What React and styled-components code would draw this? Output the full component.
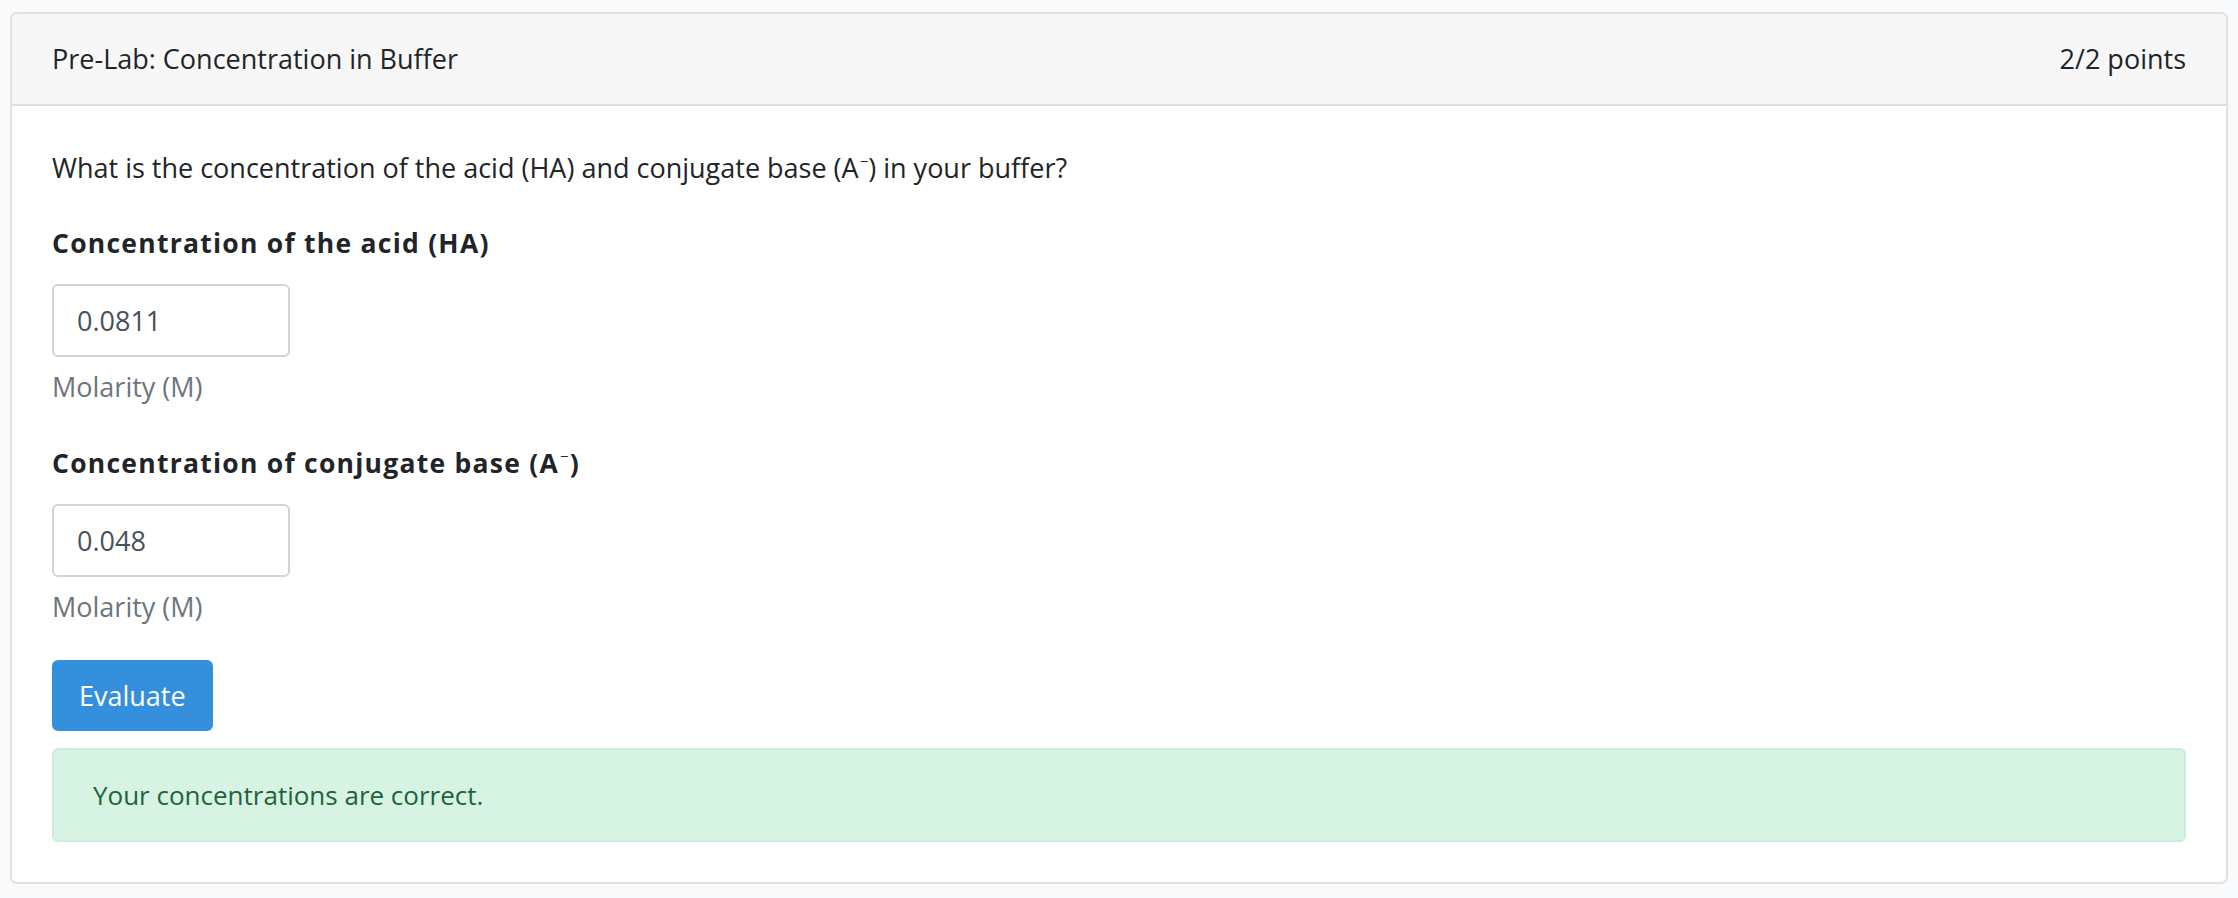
import styled, { createGlobalStyle } from "styled-components";

const GlobalStyle = createGlobalStyle`
  body {
    margin: 0;
    background: #f8fafc;
    font-family: "Open Sans", "Noto Sans", sans-serif;
    color: #212529;
  }
`;

const Page = styled.div`
  padding: 12px 10px 13px;
`;

const Card = styled.div`
  background: #fff;
  border: 2px solid #e0e1e2;
  border-radius: 7px;
  overflow: hidden;
`;

const CardHeader = styled.div`
  display: flex;
  justify-content: space-between;
  align-items: center;
  padding: 27px 40px;
  background: #f7f7f7;
  border-bottom: 2px solid #dfdfdf;
  font-size: 27px;
  line-height: 36px;
`;

const CardBody = styled.div`
  display: flex;
  flex-direction: column;
  align-items: flex-start;
  padding: 44px 40px 40px;
`;

const Question = styled.p`
  margin: 0 0 39px;
  font-size: 27px;
  line-height: 36px;
`;

const Field = styled.div`
  display: flex;
  flex-direction: column;
  align-items: flex-start;
  margin-bottom: ${(p) => (p.$last ? "35px" : "40px")};
`;

const FieldLabel = styled.label`
  margin-bottom: 23px;
  font-size: 26.5px;
  font-weight: 700;
  letter-spacing: 1.25px;
  line-height: 36px;
`;

const Sup = styled.sup`
  font-size: 15px;
  font-weight: 400;
  line-height: 0;
  vertical-align: 11px;
  margin-left: 1px;
`;

const Input = styled.input`
  box-sizing: border-box;
  width: 238px;
  height: 73px;
  padding: 0 23px;
  border: 2px solid #ced4da;
  border-radius: 6px;
  background: #fff;
  color: #495057;
  font-family: inherit;
  font-size: 27px;
  outline: none;
`;

const HelpText = styled.span`
  margin-top: 12px;
  color: #6c757d;
  font-size: 27px;
  line-height: 36px;
`;

const Button = styled.button`
  height: 71px;
  padding: 0 25px;
  border: 2px solid #3490dc;
  border-radius: 6px;
  background: #3490dc;
  color: #fff;
  font-family: inherit;
  font-size: 27px;
  cursor: pointer;
`;

const Alert = styled.div`
  box-sizing: border-box;
  align-self: stretch;
  margin-top: 17px;
  padding: 27px 39px;
  border: 2px solid #c7eed8;
  border-radius: 6px;
  background: #d7f3e3;
  color: #1d643b;
  font-size: 26px;
  line-height: 36px;
`;

const fields = [
  {
    label: <>Concentration of the acid (HA)</>,
    value: "0.0811",
  },
  {
    label: (
      <>
        Concentration of conjugate base (A<Sup>−</Sup>)
      </>
    ),
    value: "0.048",
  },
];

export default function App() {
  return (
    <>
      <GlobalStyle />
      <Page>
        <Card>
          <CardHeader>
            <span>Pre-Lab: Concentration in Buffer</span>
            <span>2/2 points</span>
          </CardHeader>
          <CardBody>
            <Question>
              What is the concentration of the acid (HA) and conjugate base (A
              <Sup>−</Sup>) in your buffer?
            </Question>
            {fields.map((f, i) => (
              <Field key={i} $last={i === fields.length - 1}>
                <FieldLabel>{f.label}</FieldLabel>
                <Input type="text" defaultValue={f.value} readOnly />
                <HelpText>Molarity (M)</HelpText>
              </Field>
            ))}
            <Button type="button">Evaluate</Button>
            <Alert>Your concentrations are correct.</Alert>
          </CardBody>
        </Card>
      </Page>
    </>
  );
}
